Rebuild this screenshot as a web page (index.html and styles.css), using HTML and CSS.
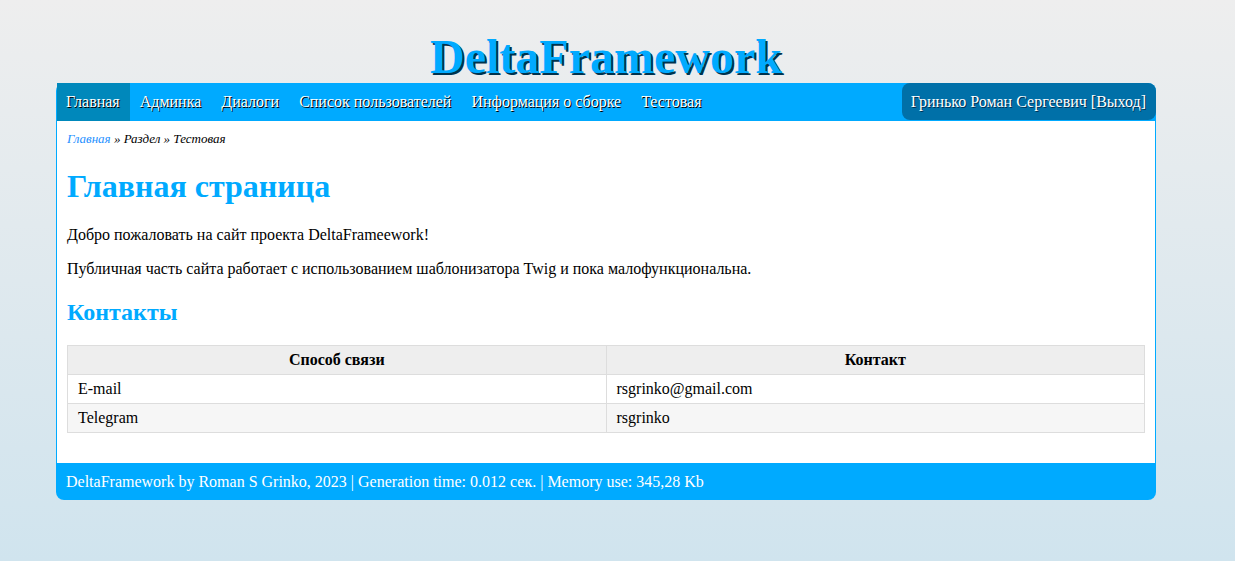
FILE: index.html
```html
<!DOCTYPE html>
<html lang="ru">
<head>
<meta charset="utf-8">
<title>DeltaFramework</title>
<link rel="stylesheet" href="styles.css">
</head>
<body>
<div class="page">
  <div class="logo">DeltaFramework</div>
  <div class="wrap">
    <nav class="menu">
      <ul class="menu-list">
        <li class="active"><a href="#">Главная</a></li>
        <li><a href="#">Админка</a></li>
        <li><a href="#">Диалоги</a></li>
        <li><a href="#">Список пользователей</a></li>
        <li><a href="#">Информация о сборке</a></li>
        <li><a href="#">Тестовая</a></li>
      </ul>
      <div class="user">Гринько Роман Сергеевич [<a href="#">Выход</a>]</div>
    </nav>
    <main class="content">
      <div class="crumbs"><a href="#">Главная</a> » Раздел » Тестовая</div>
      <h1 class="title">Главная страница</h1>
      <p class="text">Добро пожаловать на сайт проекта DeltaFrameework!</p>
      <p class="text">Публичная часть сайта работает с использованием шаблонизатора Twig и пока малофункциональна.</p>
      <h2 class="subtitle">Контакты</h2>
      <table class="grid">
        <thead>
          <tr><th>Способ связи</th><th>Контакт</th></tr>
        </thead>
        <tbody>
          <tr><td>E-mail</td><td>rsgrinko@gmail.com</td></tr>
          <tr class="alt"><td>Telegram</td><td>rsgrinko</td></tr>
        </tbody>
      </table>
    </main>
    <footer class="foot">DeltaFramework by Roman S Grinko, 2023 | Generation time: 0.012 сек. | Memory use: 345,28 Kb</footer>
  </div>
</div>
</body>
</html>
```
FILE: styles.css
```css
html, body {
  margin: 0;
  padding: 0;
  min-height: 100%;
}
body {
  background: linear-gradient(to bottom, #eeeeee 0%, #d0e4ee 100%);
  min-height: 561px;
  font-family: "Liberation Serif", "Times New Roman", serif;
  font-size: 16px;
  color: #000;
  padding-right: 23px;
  box-sizing: border-box;
}
.page {
  width: 1100px;
  margin: 0 auto;
  padding-top: 31px;
}
.logo {
  text-align: center;
  font-size: 48px;
  font-weight: bold;
  line-height: 52px;
  color: #00aaff;
  text-shadow: 2px 2px 0 #00334d;
  margin-bottom: 0;
}
.menu {
  display: flex;
  justify-content: space-between;
  background: #00aaff;
  border-radius: 8px 8px 0 0;
  height: 38px;
}
.menu-list {
  display: flex;
  list-style: none;
  margin: 0;
  padding: 0 0 0 1px;
}
.menu-list li a {
  display: block;
  padding: 10px 10px;
  line-height: 18px;
  color: #fff;
  text-decoration: none;
  text-shadow: 1px 1px 0 #000;
}
.menu-list li.active a {
  background: #0088bb;
}
.menu-list li:first-child a {
  padding-left: 9px;
}
.user {
  background: #0070a8;
  color: #fff;
  border-radius: 8px;
  padding: 10px 10px 10px 9px;
  line-height: 17px;
  height: 17px;
  text-shadow: 1px 1px 0 #003355;
}
.user a {
  color: #fff;
  text-decoration: none;
}
.content {
  background: #fff;
  border-left: 1px solid #00aaff;
  border-right: 1px solid #00aaff;
  padding: 10px 10px 30px 10px;
}
.crumbs {
  font-style: italic;
  font-size: 13px;
  line-height: 15px;
}
.crumbs a {
  color: #1e90ff;
  text-decoration: none;
}
.title {
  font-size: 32px;
  color: #00aaff;
  margin: 22px 0 21px 0;
  line-height: 37px;
}
.text {
  margin: 0 0 16px 0;
  line-height: 18px;
}
.subtitle {
  font-size: 24px;
  color: #00aaff;
  margin: 20px 0 0 0;
  line-height: 28px;
}
.grid {
  width: 100%;
  border-collapse: collapse;
  table-layout: fixed;
  margin-top: 19px;
}
.grid th, .grid td {
  border: 1px solid #dddddd;
  padding: 5px 10px;
  line-height: 18px;
  text-align: left;
}
.grid th {
  width: 50%;
  background: #eeeeee;
  text-align: center;
  font-weight: bold;
}
.grid tr.alt td {
  background: #f6f6f6;
}
.foot {
  background: #00aaff;
  color: #fff;
  border-radius: 0 0 8px 8px;
  padding: 10px 10px;
  line-height: 17px;
}
```
